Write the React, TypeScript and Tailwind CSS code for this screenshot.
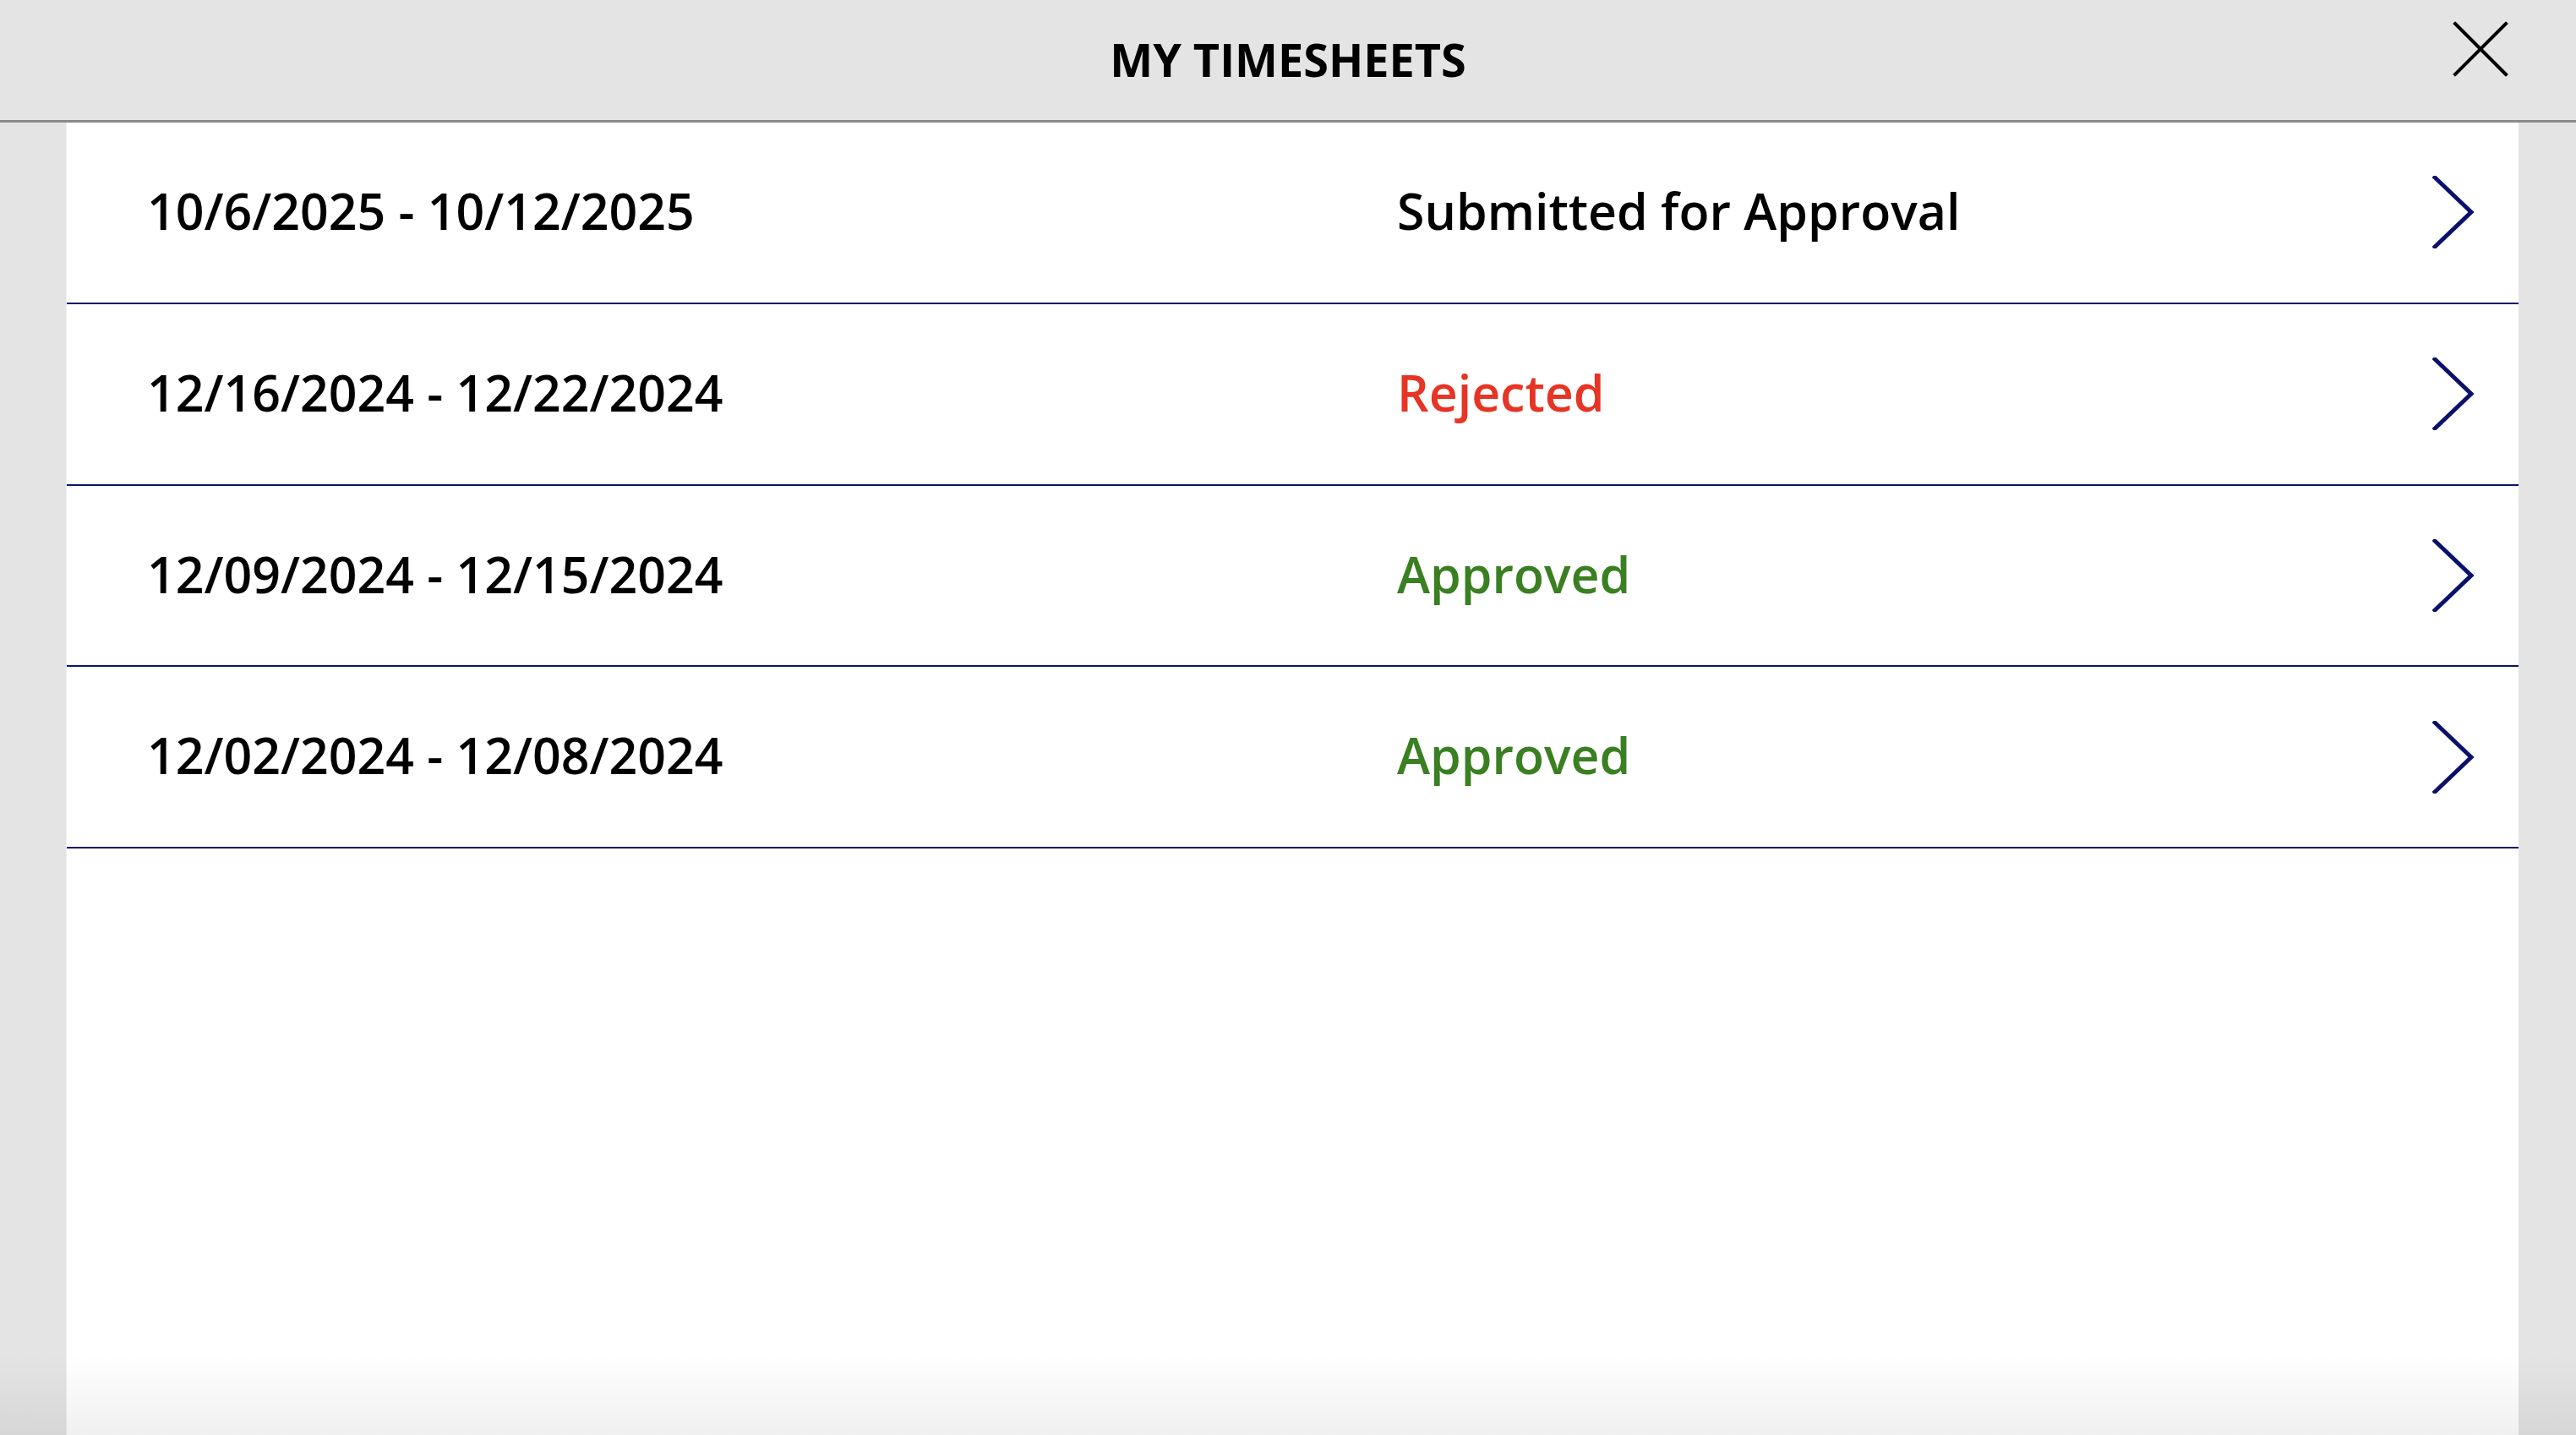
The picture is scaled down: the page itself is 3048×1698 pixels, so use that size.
import React from 'react';

type Timesheet = {
  range: string;
  status: string;
  tone: 'neutral' | 'rejected' | 'approved';
};

const timesheets: Timesheet[] = [
  { range: '10/6/2025 - 10/12/2025', status: 'Submitted for Approval', tone: 'neutral' },
  { range: '12/16/2024 - 12/22/2024', status: 'Rejected', tone: 'rejected' },
  { range: '12/09/2024 - 12/15/2024', status: 'Approved', tone: 'approved' },
  { range: '12/02/2024 - 12/08/2024', status: 'Approved', tone: 'approved' },
];

const toneClass = {
  neutral: 'text-black',
  rejected: 'text-[#e63425]',
  approved: 'text-[#3a7f22]',
};

function CloseIcon() {
  return (
    <svg width="66" height="66" viewBox="0 0 66 66" fill="none">
      <path d="M3 3 L63 63 M63 3 L3 63" stroke="#000" strokeWidth="4" strokeLinecap="square" />
    </svg>
  );
}

function Chevron() {
  return (
    <svg width="50" height="86" viewBox="0 0 50 86" fill="none">
      <path d="M3 2 L46 43 L3 84" stroke="#0b116b" strokeWidth="5" strokeLinecap="square" strokeLinejoin="miter" />
    </svg>
  );
}

function TimesheetRow({ item }: { item: Timesheet }) {
  return (
    <div className="flex h-[214.75px] items-center border-b-2 border-[#0a146c] pb-[4px] pl-[95px] pr-[52px]">
      <div className="w-[1479px] text-[59px] font-semibold text-black">{item.range}</div>
      <div className={`flex-1 text-[59px] font-semibold ${toneClass[item.tone]}`}>{item.status}</div>
      <div className="pt-[4px]">
        <Chevron />
      </div>
    </div>
  );
}

export default function App() {
  return (
    <div
      className="relative flex h-[1698px] w-full flex-col overflow-hidden bg-[#e4e4e4]"
      style={{ fontFamily: '"Open Sans", "Liberation Sans", sans-serif' }}
    >
      {/* Header */}
      <header className="relative flex h-[145px] shrink-0 items-center justify-center border-b-[3px] border-[#8a8a8a] bg-[#e4e4e4] pb-[2px]">
        <h1 className="text-[54px] font-bold text-black">MY TIMESHEETS</h1>
        <button className="absolute right-[80px] top-[25px]">
          <CloseIcon />
        </button>
      </header>

      {/* List */}
      <main className="ml-[78px] mr-[68px] flex-1 border-l border-[#efefef] bg-white">
        {timesheets.map((t, i) => (
          <TimesheetRow key={i} item={t} />
        ))}
      </main>

      {/* bottom shade */}
      <div className="pointer-events-none absolute inset-x-0 bottom-0 h-[95px] bg-gradient-to-b from-transparent to-black/[0.06]" />
    </div>
  );
}
